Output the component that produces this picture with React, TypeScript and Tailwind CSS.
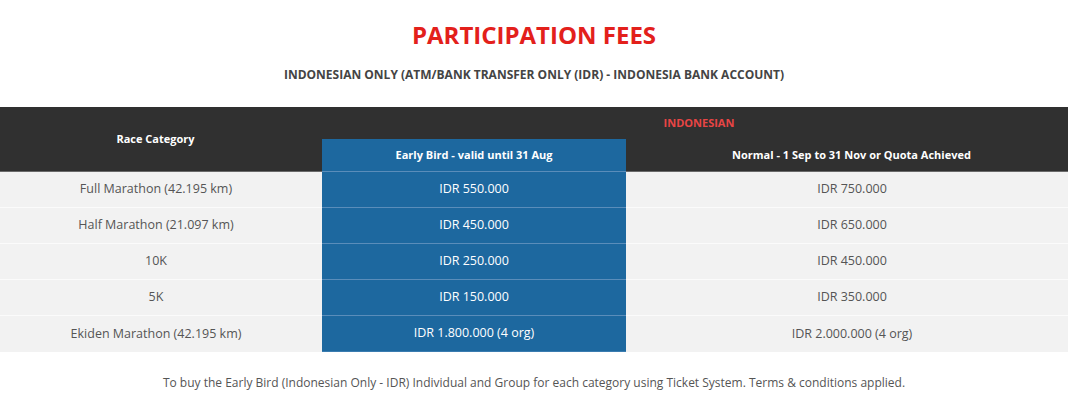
import React from "react";

const rows = [
  ["Full Marathon (42.195 km)", "IDR 550.000", "IDR 750.000"],
  ["Half Marathon (21.097 km)", "IDR 450.000", "IDR 650.000"],
  ["10K", "IDR 250.000", "IDR 450.000"],
  ["5K", "IDR 150.000", "IDR 350.000"],
  ["Ekiden Marathon (42.195 km)", "IDR 1.800.000 (4 org)", "IDR 2.000.000 (4 org)"],
];

export default function App() {
  return (
    <div className="w-[1068px] h-[419px] bg-white" style={{ fontFamily: '"Open Sans", sans-serif' }}>
      <div className="pt-[19px] text-center">
        <h1 className="text-[24px] leading-[32px] font-bold text-[#e3201b]">PARTICIPATION FEES</h1>
        <p className="mt-[15px] text-[12px] leading-[18px] font-bold text-[#444]">
          INDONESIAN ONLY (ATM/BANK TRANSFER ONLY (IDR) - INDONESIA BANK ACCOUNT)
        </p>
      </div>
      <div className="mt-[23px]">
        <div className="flex h-[64px] bg-[#303030]">
          <div className="w-[322px] flex items-center justify-center pr-[11px] text-[11px] font-bold text-white">
            Race Category
          </div>
          <div className="flex-1 flex flex-col">
            <div className="h-[32px] flex items-center justify-center pl-[8px] text-[11px] font-bold text-[#e84545]">
              INDONESIAN
            </div>
            <div className="h-[32px] flex">
              <div className="w-[304px] bg-[#1d689f] flex items-center justify-center text-[11px] font-bold text-white">
                Early Bird - valid until 31 Aug
              </div>
              <div className="flex-1 flex items-center justify-center pl-[9px] text-[11px] font-bold text-white">
                Normal - 1 Sep to 31 Nov or Quota Achieved
              </div>
            </div>
          </div>
        </div>
        <div className="flex h-px">
          <div className="w-[322px] bg-[#6a6a6a]" />
          <div className="w-[304px] bg-[#5a8dba]" />
          <div className="flex-1 bg-[#6a6a6a]" />
        </div>
        {rows.map((r, i) => (
          <div key={i} className="flex h-[36px] text-[12.5px]">
            <div className={`w-[322px] bg-[#f2f2f2] flex items-center justify-center pr-[10px] text-[#555] ${i < rows.length - 1 ? "border-b border-[#fbfbfb]" : ""}`}>
              {r[0]}
            </div>
            <div className={`w-[304px] bg-[#1d689f] flex items-center justify-center text-white font-medium ${i < rows.length - 1 ? "border-b border-[#5a8dba]" : "border-b border-[#3a7cb0]"}`}>
              {r[1]}
            </div>
            <div className={`flex-1 bg-[#f2f2f2] flex items-center justify-center pl-[10px] text-[#555] ${i < rows.length - 1 ? "border-b border-[#fbfbfb]" : ""}`}>
              {r[2]}
            </div>
          </div>
        ))}
      </div>
      <p className="mt-[22px] text-center text-[12px] leading-[18px] text-[#555]">
        To buy the Early Bird (Indonesian Only - IDR) Individual and Group for each category using Ticket System. Terms &amp; conditions applied.
      </p>
    </div>
  );
}
